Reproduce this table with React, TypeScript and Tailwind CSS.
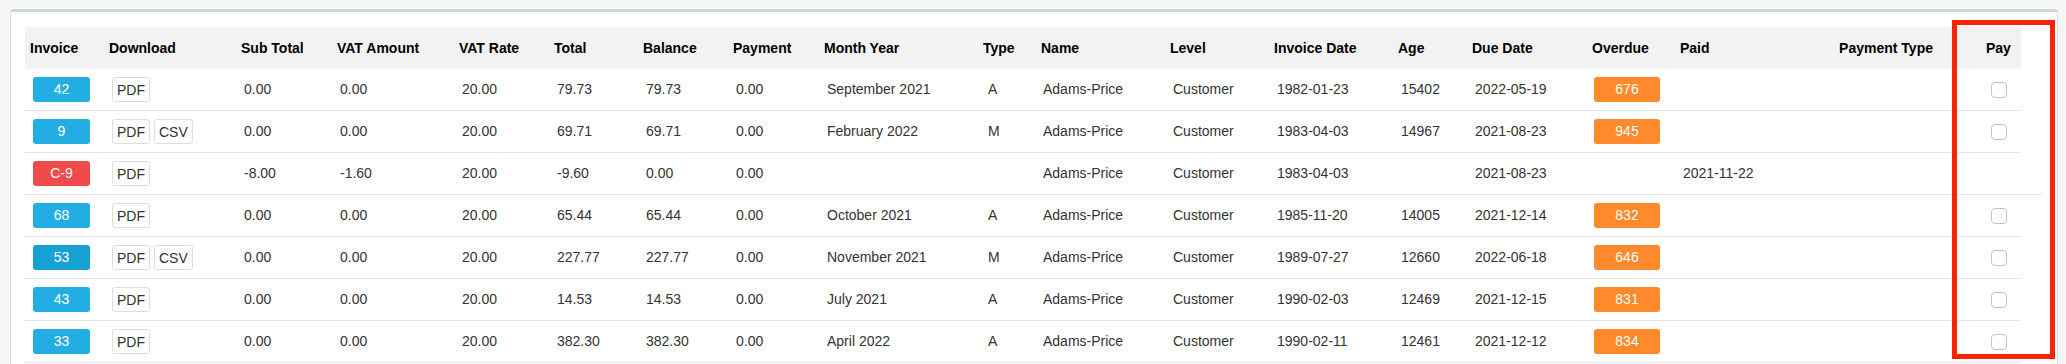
import React from "react";

type Invoice = {
  id: string;
  kind: "info" | "active" | "credit";
  csv?: boolean;
  subTotal: string;
  vatAmount: string;
  vatRate: string;
  total: string;
  balance: string;
  payment: string;
  monthYear: string;
  type: string;
  name: string;
  level: string;
  invoiceDate: string;
  age: string;
  dueDate: string;
  overdue?: string;
  paid?: string;
  paymentType?: string;
  payable: boolean;
};

const invoices: Invoice[] = [
  { id: "42", kind: "info", subTotal: "0.00", vatAmount: "0.00", vatRate: "20.00", total: "79.73", balance: "79.73", payment: "0.00", monthYear: "September 2021", type: "A", name: "Adams-Price", level: "Customer", invoiceDate: "1982-01-23", age: "15402", dueDate: "2022-05-19", overdue: "676", payable: true },
  { id: "9", kind: "info", csv: true, subTotal: "0.00", vatAmount: "0.00", vatRate: "20.00", total: "69.71", balance: "69.71", payment: "0.00", monthYear: "February 2022", type: "M", name: "Adams-Price", level: "Customer", invoiceDate: "1983-04-03", age: "14967", dueDate: "2021-08-23", overdue: "945", payable: true },
  { id: "C-9", kind: "credit", subTotal: "-8.00", vatAmount: "-1.60", vatRate: "20.00", total: "-9.60", balance: "0.00", payment: "0.00", monthYear: "", type: "", name: "Adams-Price", level: "Customer", invoiceDate: "1983-04-03", age: "", dueDate: "2021-08-23", paid: "2021-11-22", payable: false },
  { id: "68", kind: "info", subTotal: "0.00", vatAmount: "0.00", vatRate: "20.00", total: "65.44", balance: "65.44", payment: "0.00", monthYear: "October 2021", type: "A", name: "Adams-Price", level: "Customer", invoiceDate: "1985-11-20", age: "14005", dueDate: "2021-12-14", overdue: "832", payable: true },
  { id: "53", kind: "active", csv: true, subTotal: "0.00", vatAmount: "0.00", vatRate: "20.00", total: "227.77", balance: "227.77", payment: "0.00", monthYear: "November 2021", type: "M", name: "Adams-Price", level: "Customer", invoiceDate: "1989-07-27", age: "12660", dueDate: "2022-06-18", overdue: "646", payable: true },
  { id: "43", kind: "info", subTotal: "0.00", vatAmount: "0.00", vatRate: "20.00", total: "14.53", balance: "14.53", payment: "0.00", monthYear: "July 2021", type: "A", name: "Adams-Price", level: "Customer", invoiceDate: "1990-02-03", age: "12469", dueDate: "2021-12-15", overdue: "831", payable: true },
  { id: "33", kind: "info", subTotal: "0.00", vatAmount: "0.00", vatRate: "20.00", total: "382.30", balance: "382.30", payment: "0.00", monthYear: "April 2022", type: "A", name: "Adams-Price", level: "Customer", invoiceDate: "1990-02-11", age: "12461", dueDate: "2021-12-12", overdue: "834", payable: true },
];

const cols =
  "grid grid-cols-[79px_132px_96px_122px_95px_89px_90px_91px_159px_58px_129px_104px_124px_74px_120px_88px_125px_145px_76px] items-center";

const headers = [
  "Invoice",
  "Download",
  "Sub Total",
  "VAT Amount",
  "VAT Rate",
  "Total",
  "Balance",
  "Payment",
  "Month Year",
  "Type",
  "Name",
  "Level",
  "Invoice Date",
  "Age",
  "Due Date",
  "Overdue",
  "Paid",
];

const badgeColor = {
  info: "bg-[#23aee3]",
  active: "bg-[#17a0d4]",
  credit: "bg-[#f04a4a]",
};

const FileButton = ({ label }: { label: string }) => (
  <button className="h-[25px] px-[4px] rounded-[3px] border border-[#dedede] bg-white text-[14px] leading-none text-[#333]">
    {label}
  </button>
);

const App: React.FC = () => {
  return (
    <div className="min-h-screen bg-[#f6f6f6] pt-[9px] pl-[10px] pr-[8px] font-['Liberation_Sans',Arial,sans-serif] text-[14px]">
      <div className="relative h-[400px] rounded-[4px] border border-[#d9e1e6] border-t-[3px] border-t-[#c9d6de] bg-white pt-[15px] pl-[14px]">
        {/* header */}
        <div className={`${cols} h-[42px] w-[1996px] bg-[#f2f2f2] font-bold text-black`}>
          {headers.map((h) => (
            <div key={h} className="pl-[5px] whitespace-nowrap">
              {h}
            </div>
          ))}
          <div className="text-right pr-[12px] whitespace-nowrap">Payment Type</div>
          <div className="pl-[41px]">Pay</div>
        </div>

        {/* rows */}
        {invoices.map((inv) => (
          <div
            key={inv.id}
            className={`${cols} h-[42px] border-b border-[#e6e6e6] text-[#333] whitespace-nowrap ${
              inv.payable ? "w-[1996px]" : "w-[2017px]"
            }`}
          >
            <div className="pl-[8px]">
              <span
                className={`flex h-[25px] w-[57px] items-center justify-center rounded-[3px] text-white ${badgeColor[inv.kind]}`}
              >
                {inv.id}
              </span>
            </div>
            <div className="pl-[8px] flex gap-[4px]">
              <FileButton label="PDF" />
              {inv.csv && <FileButton label="CSV" />}
            </div>
            <div className="pl-[8px]">{inv.subTotal}</div>
            <div className="pl-[8px]">{inv.vatAmount}</div>
            <div className="pl-[8px]">{inv.vatRate}</div>
            <div className="pl-[8px]">{inv.total}</div>
            <div className="pl-[8px]">{inv.balance}</div>
            <div className="pl-[8px]">{inv.payment}</div>
            <div className="pl-[8px]">{inv.monthYear}</div>
            <div className="pl-[10px]">{inv.type}</div>
            <div className="pl-[7px]">{inv.name}</div>
            <div className="pl-[8px]">{inv.level}</div>
            <div className="pl-[8px]">{inv.invoiceDate}</div>
            <div className="pl-[8px]">{inv.age}</div>
            <div className="pl-[8px]">{inv.dueDate}</div>
            <div className="pl-[7px]">
              {inv.overdue && (
                <span className="flex h-[25px] w-[66px] items-center justify-center rounded-[3px] bg-[#fe8a2b] text-white">
                  {inv.overdue}
                </span>
              )}
            </div>
            <div className="pl-[8px]">{inv.paid}</div>
            <div className="text-right pr-[12px]">{inv.paymentType}</div>
            <div className="pl-[46px] flex items-center">
              {inv.payable && (
                <input
                  type="checkbox"
                  className="appearance-none h-[16px] w-[16px] rounded-[4px] border border-[#c4c4c4] bg-white"
                />
              )}
            </div>
          </div>
        ))}

        {/* highlight overlay */}
        <div className="pointer-events-none absolute left-[1941px] top-[8px] h-[339px] w-[103px] border-[5px] border-[#ff2200]" />
      </div>
    </div>
  );
};

export default App;
